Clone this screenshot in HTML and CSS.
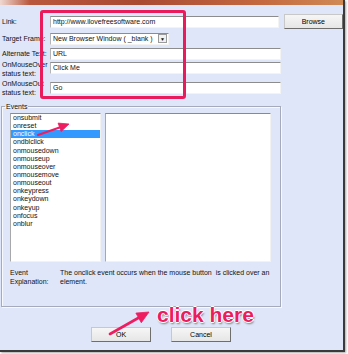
FILE: index.html
```html
<!DOCTYPE html>
<html lang="en">
<head>
    <meta charset="UTF-8">
    <meta name="viewport" content="width=device-width, initial-scale=1.0">
    <title>Link properties</title>
    <link rel="stylesheet" href="styles.css">
</head>
<body>
    <div class="dialog">
        <div class="titlebar"></div>

        <div class="form">
            <div class="row row-link">
                <span class="label">Link:</span>
                <div class="field wide">http://www.ilovefreesoftware.com</div>
                <button class="btn browse">Browse</button>
            </div>
            <div class="row row-target">
                <span class="label">Target Frame:</span>
                <div class="field select">New Browser Window ( _blank )<span class="drop">&#9660;</span></div>
            </div>
            <div class="row row-alt">
                <span class="label">Alternate Text:</span>
                <div class="field wide">URL</div>
            </div>
            <div class="row row-over">
                <span class="label two">OnMouseOver<br>status text:</span>
                <div class="field wide">Click Me</div>
            </div>
            <div class="row row-out">
                <span class="label two">OnMouseOut<br>status text:</span>
                <div class="field wide">Go</div>
            </div>
        </div>

        <fieldset class="events">
            <legend>Events</legend>
            <div class="lists">
                <ul class="listbox events-list">
                    <li>onsubmit</li>
                    <li>onreset</li>
                    <li class="on">onclick</li>
                    <li>ondblclick</li>
                    <li>onmousedown</li>
                    <li>onmouseup</li>
                    <li>onmouseover</li>
                    <li>onmousemove</li>
                    <li>onmouseout</li>
                    <li>onkeypress</li>
                    <li>onkeydown</li>
                    <li>onkeyup</li>
                    <li>onfocus</li>
                    <li>onblur</li>
                </ul>
                <div class="listbox code"></div>
            </div>
            <div class="explain">
                <span class="label two">Event<br>Explanation:</span>
                <p>The onclick event occurs when the mouse button&nbsp; is clicked over an<br>element.</p>
            </div>
        </fieldset>

        <div class="buttons">
            <button class="btn">OK</button>
            <button class="btn">Cancel</button>
        </div>

        <!-- annotations drawn over the dialog -->
        <div class="mark"></div>
        <div class="click-here">click here</div>
        <svg class="arrows" width="348" height="354" viewBox="0 0 348 354">
            <g fill="#ee1d62" stroke="#ee1d62" stroke-linejoin="round">
                <line x1="38" y1="135" x2="61" y2="127" stroke-width="2.2" stroke-linecap="round"/>
                <polygon points="69,124 61.1,131.6 58.1,123.1" stroke-width="0.8"/>
                <line x1="110" y1="334" x2="140" y2="317" stroke-width="2.6" stroke-linecap="round"/>
                <polygon points="149,312 141.3,322.7 135.9,313.1" stroke-width="0.8"/>
            </g>
        </svg>
    </div>
</body>
</html>
```

FILE: styles.css
```css
*{margin:0px;padding:0px;box-sizing:border-box;}

ul, li{list-style:none;}

body{
    width:348px;height:354px;
    background:#fff;
    font-family:"Liberation Sans", Arial, sans-serif;
    font-size:7px;
    color:#111;
    overflow:hidden;
}

.dialog{
    width:345px;height:352px;
    background:#e0e6f9;
    border-right:2px solid #3a3a3a;
    border-bottom:2px solid #3a3a3a;
    box-shadow:1px 1px 2px rgba(0,0,0,.35);
    position:relative;
}
.titlebar{
    height:5px;
    background:linear-gradient(to right, #efd9d2 0px, #b9573c 30px, #a94a33 140px, #c4683f 260px, #d08a55 345px);
}

/* upper form */
.form{padding-top:9px;}
.row{display:flex;align-items:flex-start;}
.label{
    width:50px;padding-left:2px;
    white-space:nowrap;overflow:hidden;
    flex-shrink:0;
}
.label.two{line-height:9px;}

.field{
    height:12px;
    background:#fff;
    border:1px solid #f3f3f3;
    border-top-color:#8c8c8c;
    border-left-color:#b4b4b4;
    padding-left:2px;
    line-height:10px;
    white-space:nowrap;
}
.field.wide{width:231px;}

.row-link{height:16px;}
.row-link .label{line-height:16px;}
.row-link .field{margin-top:2px;}
.browse{width:55px;height:16px;margin-left:5px;}

.row-target{height:12px;margin-top:3px;}
.row-target .label{line-height:12px;}
.select{width:119px;display:flex;justify-content:space-between;padding-right:1px;}
.drop{
    width:9px;height:9px;margin-top:0px;
    background:#f1f1f1;
    border:1px solid #9a9a9a;
    font-size:5px;line-height:8px;text-align:center;
}

.row-alt{height:12px;margin-top:3px;}
.row-alt .label{line-height:12px;}

.row-over{height:18px;margin-top:0px;}
.row-over .field{margin-top:2px;}

.row-out{height:18px;margin-top:1px;}
.row-out .field{margin-top:3px;}

/* events group */
.events{
    width:280px;
    margin:5px 0 0 1px;
    padding:2px 9px 20px 8px;
    border:1px solid #a5abba;
    box-shadow:1px 1px 0 #f7f9ff, inset 1px 1px 0 #f7f9ff;
}
.events legend{
    margin-left:-5px;
    padding:0 1px;
    line-height:9px;
}
.lists{display:flex;gap:4px;}
.listbox{
    height:149px;
    background:#fff;
    border:1px solid #f2f2f2;
    border-top-color:#8a8a8a;
    border-left-color:#a8a8a8;
}
.events-list{width:91px;}
.events-list li{
    line-height:8.15px;height:8.15px;
    padding-left:2px;
}
.events-list li.on{background:#3399ff;color:#fff;}
.code{width:166px;}

.explain{display:flex;margin-top:6px;}
.explain .label{padding-left:0;}
.explain p{line-height:9px;}

/* bottom buttons */
.buttons{
    display:flex;gap:20px;
    margin-top:20px;
    padding-left:91px;
}
.btn{
    width:60px;height:15px;
    font-family:"Liberation Sans", Arial, sans-serif;
    font-size:7px;color:#000;
    background:linear-gradient(#f6f6f6, #e6e6e6);
    border:1px solid #c8c8c8;
    border-right-color:#6e6e6e;
    border-bottom-color:#6e6e6e;
}

/* annotations */
.mark{
    position:absolute;left:40px;top:10px;
    width:146px;height:89px;
    border:3px solid #ea1b5d;
    border-radius:3px;
}
.click-here{
    position:absolute;left:157px;top:304px;
    font-size:21px;line-height:21px;font-weight:bold;
    color:#ec1c5f;
    text-shadow:1px 0 0 #fff, -1px 0 0 #fff, 0 1px 0 #fff, 0 -1px 0 #fff, 1px 2px 2px rgba(0,0,0,.45);
    white-space:nowrap;
}
.arrows{position:absolute;left:0px;top:0px;}
```
